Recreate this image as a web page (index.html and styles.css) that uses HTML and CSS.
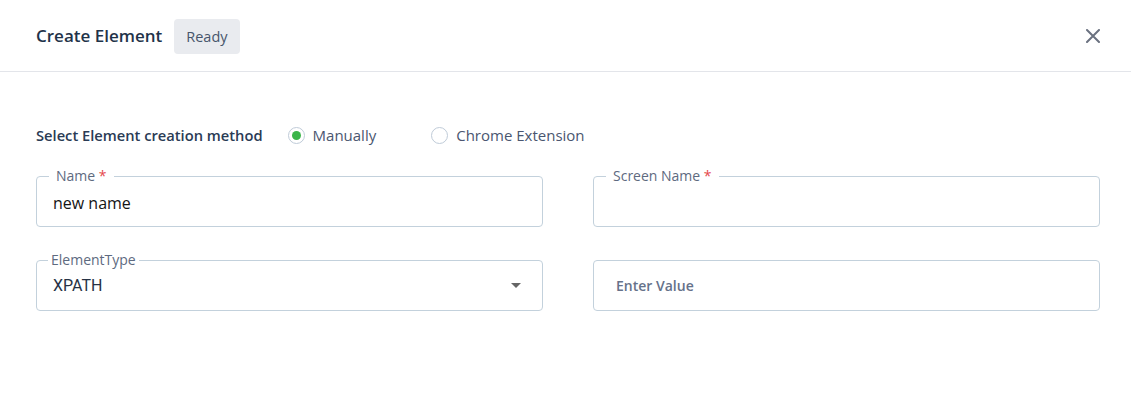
FILE: index.html
```html
<!DOCTYPE html>
<html lang="en">
<head>
  <meta charset="UTF-8" />
  <title>Create Element</title>
  <link rel="stylesheet" href="styles.css">
</head>
<body>

  <div class="modal">
    <!-- Header -->
    <div class="modal-header">
      <h1 class="title">Create Element</h1>
      <span class="badge">Ready</span>
      <button class="close" type="button" aria-label="Close">
        <svg width="14" height="14" viewBox="0 0 14 14">
          <path d="M1 1 L13 13 M13 1 L1 13" stroke="#6b7280" stroke-width="2" stroke-linecap="round" />
        </svg>
      </button>
    </div>

    <!-- Body -->
    <div class="modal-body">
      <div class="method-row">
        <span class="method-label">Select Element creation method</span>
        <label class="radio checked"><span class="dot"></span>Manually</label>
        <label class="radio"><span class="dot"></span>Chrome Extension</label>
      </div>

      <div class="grid">
        <div class="field">
          <span class="field-label">Name <span class="req">*</span></span>
          <span class="value">new name</span>
        </div>
        <div class="field">
          <span class="field-label">Screen Name <span class="req">*</span></span>
        </div>
        <div class="field select">
          <span class="field-label small">ElementType</span>
          <span class="value light">XPATH</span>
          <span class="caret"></span>
        </div>
        <div class="field plain">
          <span class="placeholder">Enter Value</span>
        </div>
      </div>
    </div>
  </div>

</body>
</html>
```

FILE: styles.css
```css
body {
  margin: 0;
  background: #fff;
  font-family: "Open Sans", "Noto Sans", sans-serif;
  color: #253858;
}

.modal-header {
  height: 72px;
  display: flex;
  align-items: center;
  padding: 0 31px 0 36px;
  border-bottom: 1px solid #e3e5ea;
  box-sizing: border-box;
}

.title {
  margin: 0;
  font-size: 17px;
  font-weight: 600;
  color: #1f3349;
}

.badge {
  margin-left: 12px;
  background: #e9ebef;
  color: #47556b;
  font-size: 14.5px;
  border-radius: 4px;
  padding: 0 12px;
  height: 35px;
  line-height: 35px;
  margin-top: 2px;
}

.close {
  margin-left: auto;
  background: none;
  border: 0;
  padding: 0;
  width: 14px;
  height: 14px;
  cursor: pointer;
  display: flex;
}

.modal-body {
  padding: 51px 31px 0 36px;
}

.method-row {
  display: flex;
  align-items: center;
  height: 24px;
  font-size: 15px;
}

.method-label {
  font-size: 14.7px;
  font-weight: 600;
  color: #2a3b55;
  margin-right: 25px;
}

.radio {
  display: flex;
  align-items: center;
  color: #4a5670;
  margin-right: 55px;
}

.dot {
  width: 15px;
  height: 15px;
  border: 1px solid #bfcbd8;
  border-radius: 50%;
  margin-right: 8px;
  display: flex;
  align-items: center;
  justify-content: center;
}

.checked .dot::after {
  content: "";
  width: 9px;
  height: 9px;
  border-radius: 50%;
  background: #3bb54a;
}

.grid {
  display: grid;
  grid-template-columns: 1fr 1fr;
  column-gap: 50px;
  row-gap: 33px;
  margin-top: 29px;
}

.field {
  position: relative;
  height: 51px;
  border: 1px solid #c3d1dc;
  border-radius: 4px;
  box-sizing: border-box;
  display: flex;
  align-items: center;
  padding: 0 16px;
}

.field-label {
  position: absolute;
  top: -10px;
  left: 12px;
  padding: 0 7px;
  background: #fff;
  font-size: 14px;
  line-height: 18px;
  color: #5e6a80;
}

.field-label.small {
  left: 11px;
  padding: 0 3px;
}

.req {
  color: #e5484d;
}

.value {
  font-size: 16px;
  color: #141414;
  margin-top: 2px;
}

.value.light {
  font-family: Roboto, sans-serif;
  color: #263245;
  margin-top: 0;
}

.caret {
  margin-left: auto;
  margin-right: 5px;
  width: 0;
  height: 0;
  border-left: 5px solid transparent;
  border-right: 5px solid transparent;
  border-top: 5px solid #666;
}

.placeholder {
  font-size: 14px;
  font-weight: 600;
  color: #66728a;
  padding-left: 6px;
}
```
